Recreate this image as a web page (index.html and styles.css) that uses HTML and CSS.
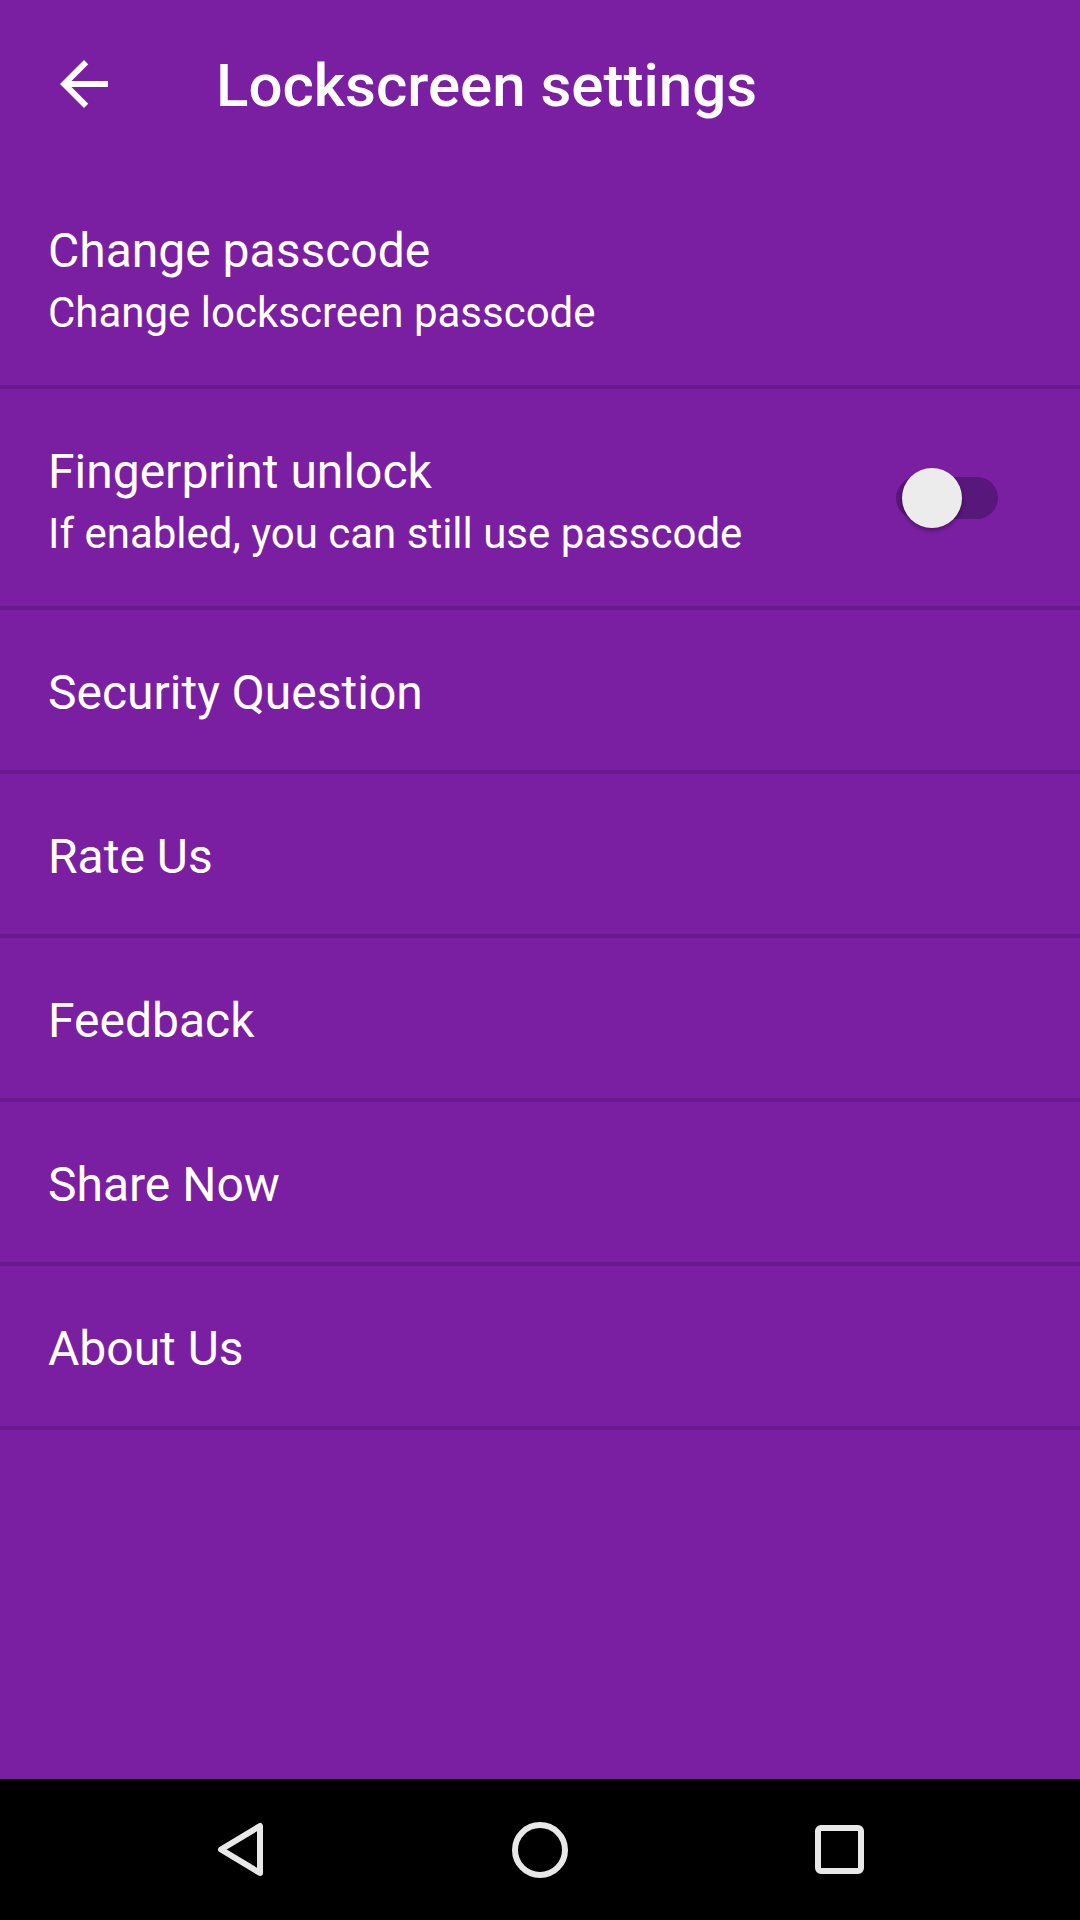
FILE: index.html
```html
<!DOCTYPE html>
<html>
  <head>
    <link rel="stylesheet" href="styles.css">
  </head>
  <body>
    <div class="screen">
      <div class="toolbar">
        <svg class="back" width="72" height="72" viewBox="0 0 24 24">
          <path fill="#fff" d="M20 11H7.83l5.59-5.59L12 4l-8 8 8 8 1.41-1.41L7.83 13H20v-2z"/>
        </svg>
        <h1>Lockscreen settings</h1>
      </div>

      <div class="list">
        <div class="row">
          <div class="text">
            <div class="title">Change passcode</div>
            <div class="summary">Change lockscreen passcode</div>
          </div>
        </div>
        <div class="row">
          <div class="text">
            <div class="title">Fingerprint unlock</div>
            <div class="summary">If enabled, you can still use passcode</div>
          </div>
          <div class="switch">
            <div class="track"></div>
            <div class="thumb"></div>
          </div>
        </div>
        <div class="row">
          <div class="text"><div class="title">Security Question</div></div>
        </div>
        <div class="row">
          <div class="text"><div class="title">Rate Us</div></div>
        </div>
        <div class="row">
          <div class="text"><div class="title">Feedback</div></div>
        </div>
        <div class="row">
          <div class="text"><div class="title">Share Now</div></div>
        </div>
        <div class="row">
          <div class="text"><div class="title">About Us</div></div>
        </div>
      </div>
    </div>

    <div class="navbar">
      <svg width="72" height="72" viewBox="0 0 72 72">
        <path d="M17 35.5 L56 12 L56 59 Z" fill="none" stroke="#e8e8e8" stroke-width="6" stroke-linejoin="round"/>
      </svg>
      <svg width="72" height="72" viewBox="0 0 72 72">
        <circle cx="36" cy="36" r="25" fill="none" stroke="#e8e8e8" stroke-width="6"/>
      </svg>
      <svg width="72" height="72" viewBox="0 0 72 72">
        <rect x="14" y="14" width="43" height="43" rx="3" fill="none" stroke="#e8e8e8" stroke-width="6"/>
      </svg>
    </div>
  </body>
</html>
```

FILE: styles.css
```css
html, body {
  margin: 0;
  padding: 0;
}

body {
  width: 1080px;
  height: 1920px;
  display: flex;
  flex-direction: column;
  background-color: #7b1fa2;
  color: white;
  font-family: Roboto, "Noto Sans", sans-serif;
}

.screen {
  flex: 1;
}

.toolbar {
  height: 168px;
  display: flex;
  align-items: center;
}

.back {
  margin-left: 48px;
}

h1 {
  margin: 3px 0 0 96px;
  font-size: 60px;
  font-weight: 500;
  line-height: 70px;
}

.row {
  display: flex;
  align-items: center;
  padding: 0 48px;
  border-bottom: 4px solid #6b1a8e;
}

.text {
  padding: 55px 0 49px;
}

.title {
  font-size: 48px;
  line-height: 56px;
}

.summary {
  font-size: 42px;
  line-height: 47px;
  margin-top: 10px;
}

/* fingerprint toggle, off state */
.switch {
  position: relative;
  width: 102px;
  height: 60px;
  margin-left: auto;
  margin-right: 34px;
}

.track {
  position: absolute;
  left: 0;
  right: 0;
  top: 9px;
  height: 42px;
  border-radius: 21px;
  background-color: #58177a;
}

.thumb {
  position: absolute;
  left: 6px;
  top: 0;
  width: 60px;
  height: 60px;
  border-radius: 50%;
  background-color: #ececec;
  box-shadow: 0 3px 4px rgba(0, 0, 0, 0.3);
}

.navbar {
  height: 141px;
  background-color: #000;
  display: flex;
  justify-content: center;
  align-items: center;
  gap: 228px;
}
```
